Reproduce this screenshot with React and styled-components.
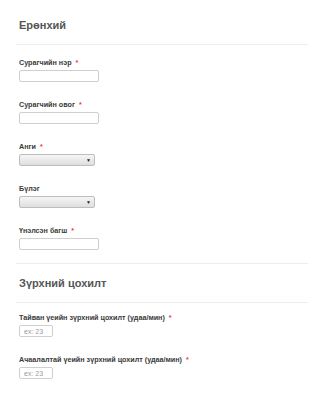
import React from 'react'
import styled, { createGlobalStyle } from 'styled-components'

const GlobalStyle = createGlobalStyle`
  html, body {
    margin: 0;
    padding: 0;
    background: #fff;
  }
  body {
    font-family: "Liberation Sans", Arial, sans-serif;
  }
`

const Page = styled.div`
  width: 325px;
  padding: 19px 17px 0 16px;
  box-sizing: border-box;
`

const Section = styled.section`
  display: flex;
  flex-direction: column;
  padding-top: ${p => p.top || 0}px;
`

const SectionHead = styled.div`
  padding: 0 0 0 3px;
  height: 25px;
  border-bottom: 1px solid #ececec;
  margin-bottom: ${p => p.gap || 12}px;

  h2 {
    margin: 0;
    font-size: 11px;
    line-height: 13px;
    font-weight: 700;
    color: #555;
  }
`

const Fields = styled.div`
  display: flex;
  flex-direction: column;
  gap: 18px;
  padding-left: 3px;
  padding-bottom: 13px;
`

const Field = styled.div`
  display: flex;
  flex-direction: column;
  gap: 2px;
`

const Label = styled.label`
  font-size: 7.2px;
  line-height: 10px;
  font-weight: 700;
  color: #3a3a3a;
  white-space: nowrap;

  span {
    color: #f2334a;
    margin-left: 4px;
  }
`

const TextInput = styled.input`
  box-sizing: border-box;
  width: ${p => p.w}px;
  height: 12px;
  border: 1px solid #cfcfcf;
  border-radius: 2px;
  padding: 0 4px;
  font-family: inherit;
  font-size: 7px;
  color: #555;
  background: #fff;
  outline: none;

  &::placeholder {
    color: #9a9a9a;
  }
`

const Select = styled.div`
  box-sizing: border-box;
  width: 76px;
  height: 12px;
  border: 1px solid #bdbdbd;
  border-radius: 2px;
  background: linear-gradient(#f6f6f6, #dedede);
  display: flex;
  align-items: center;
  justify-content: flex-end;
  padding-right: 3px;
  font-size: 5px;
  color: #222;
`

const Divider = styled.div`
  border-top: 1px solid #ececec;
`

function Req() {
  return <span>*</span>
}

export default function App() {
  return (
    <Page>
      <GlobalStyle />
      <Section>
        <SectionHead gap={13}>
          <h2>Ерөнхий</h2>
        </SectionHead>
        <Fields>
          <Field>
            <Label>Сурагчийн нэр<Req /></Label>
            <TextInput w={80} />
          </Field>
          <Field>
            <Label>Сурагчийн овог<Req /></Label>
            <TextInput w={80} />
          </Field>
          <Field>
            <Label>Анги<Req /></Label>
            <Select>▼</Select>
          </Field>
          <Field>
            <Label>Бүлэг</Label>
            <Select>▼</Select>
          </Field>
          <Field>
            <Label>Үнэлсэн багш<Req /></Label>
            <TextInput w={80} />
          </Field>
        </Fields>
        <Divider />
      </Section>
      <Section top={13}>
        <SectionHead gap={10}>
          <h2>Зүрхний цохилт</h2>
        </SectionHead>
        <Fields>
          <Field>
            <Label>Тайван үеийн зүрхний цохилт (удаа/мин)<Req /></Label>
            <TextInput w={34} placeholder="ex: 23" />
          </Field>
          <Field>
            <Label>Ачаалалтай үеийн зүрхний цохилт (удаа/мин)<Req /></Label>
            <TextInput w={34} placeholder="ex: 23" />
          </Field>
        </Fields>
      </Section>
    </Page>
  )
}
